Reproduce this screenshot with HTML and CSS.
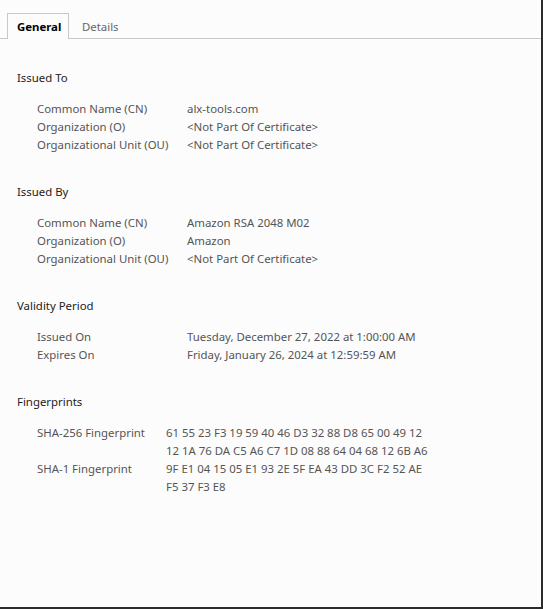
FILE: index.html
```html
<!DOCTYPE html>
<html>
<head>
<meta charset="utf-8">
<link rel="stylesheet" href="styles.css">
</head>
<body>
<div class="window">
  <div class="tabs">
    <div class="tab active">General</div>
    <div class="tab">Details</div>
  </div>
  <div class="content">
    <section class="section">
      <h2 class="heading">Issued To</h2>
      <div class="rows">
        <div class="label">Common Name (CN)</div><div class="value">alx-tools.com</div>
        <div class="label">Organization (O)</div><div class="value">&lt;Not Part Of Certificate&gt;</div>
        <div class="label">Organizational Unit (OU)</div><div class="value">&lt;Not Part Of Certificate&gt;</div>
      </div>
    </section>
    <section class="section">
      <h2 class="heading">Issued By</h2>
      <div class="rows">
        <div class="label">Common Name (CN)</div><div class="value">Amazon RSA 2048 M02</div>
        <div class="label">Organization (O)</div><div class="value">Amazon</div>
        <div class="label">Organizational Unit (OU)</div><div class="value">&lt;Not Part Of Certificate&gt;</div>
      </div>
    </section>
    <section class="section">
      <h2 class="heading">Validity Period</h2>
      <div class="rows">
        <div class="label">Issued On</div><div class="value">Tuesday, December 27, 2022 at 1:00:00 AM</div>
        <div class="label">Expires On</div><div class="value">Friday, January 26, 2024 at 12:59:59 AM</div>
      </div>
    </section>
    <section class="section">
      <h2 class="heading">Fingerprints</h2>
      <div class="rows fp">
        <div class="label">SHA-256 Fingerprint</div><div class="value">61 55 23 F3 19 59 40 46 D3 32 88 D8 65 00 49 12<br>12 1A 76 DA C5 A6 C7 1D 08 88 64 04 68 12 6B A6</div>
        <div class="label">SHA-1 Fingerprint</div><div class="value">9F E1 04 15 05 E1 93 2E 5F EA 43 DD 3C F2 52 AE<br>F5 37 F3 E8</div>
      </div>
    </section>
  </div>
</div>
</body>
</html>
```
FILE: styles.css
```css
html, body {
  margin: 0;
  padding: 0;
  background: #2b2b2b;
}
.window {
  box-sizing: border-box;
  width: 541px;
  height: 607px;
  background: #fcfcfc;
  font-family: "Noto Sans", sans-serif;
  font-size: 11.4px;
  line-height: 18px;
  color: #555;
}
.tabs {
  display: flex;
  height: 38px;
  padding-left: 7px;
  align-items: flex-end;
  border-bottom: 1px solid #c8c8c8;
  box-sizing: content-box;
}
.tab {
  height: 25px;
  line-height: 26px;
  padding: 0 13px;
  color: #666;
  margin-bottom: -1px;
  box-sizing: border-box;
}
.tab.active {
  height: 26px;
  border: 1px solid #c8c8c8;
  border-bottom: none;
  background: #fcfcfc;
  color: #000;
  font-weight: bold;
  padding: 0 9px;
  width: 62px;
}
.content {
  padding-left: 17px;
  padding-top: 1px;
}
.section {
  margin-top: 29px;
}
.heading {
  margin: 0 0 13px 0;
  font-size: 11.4px;
  font-weight: normal;
  line-height: 18px;
  color: #222;
}
.rows {
  display: grid;
  grid-template-columns: 150px auto;
  padding-left: 20px;
}
.rows.fp {
  grid-template-columns: 129px auto;
}
.label, .value {
  white-space: nowrap;
}
```
